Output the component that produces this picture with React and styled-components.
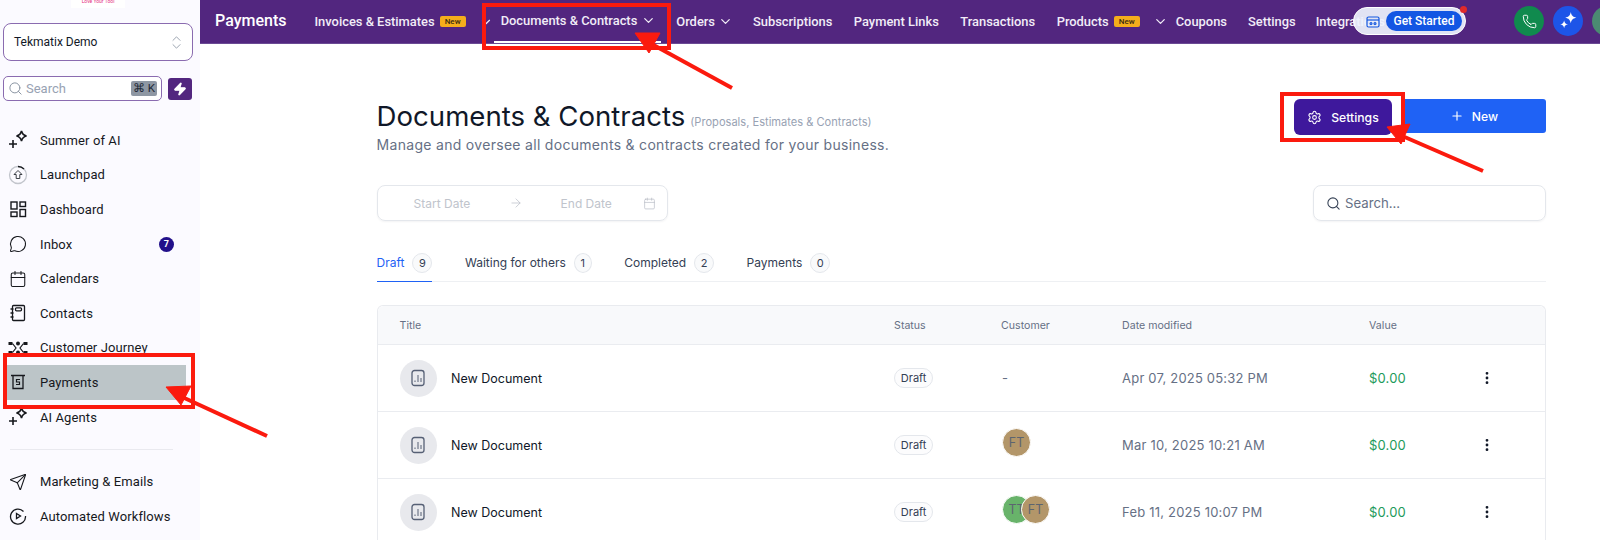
import React from "react";
import styled, { createGlobalStyle } from "styled-components";
import { ChevronDown, ChevronsUpDown, Search, Zap, Settings, Plus, ArrowRight, Calendar, MessageCircle, Send, Phone, EllipsisVertical } from "lucide-react";

const GlobalStyle = createGlobalStyle`
  html, body {
    margin: 0;
    height: 100%;
    overflow: hidden;
    background: #fff;
  }
  * {
    box-sizing: border-box;
  }
`;

const Page = styled.div`
  width: 1600px;
  height: 540px;
  display: flex;
  position: relative;
  overflow: hidden;
  font-family: Inter, "Liberation Sans", sans-serif;
`;

/* sidebar */
const Sidebar = styled.aside`
  width: 200px;
  flex: none;
  background: #fbfaff;
  font-family: Roboto, "Liberation Sans", sans-serif;
  display: flex;
  flex-direction: column;
`;

const LogoBox = styled.div`
  width: 54px;
  height: 8px;
  margin: 0 0 0 71px;
  background: #fff;
  color: #e5307f;
  font-size: 5px;
  line-height: 3px;
  text-align: center;
  overflow: hidden;
`;

const Switcher = styled.div`
  margin: 15px 7px 0 3px;
  height: 38px;
  border: 1px solid #8a6bb0;
  border-radius: 8px;
  background: #fff;
  display: flex;
  align-items: center;
  justify-content: space-between;
  padding: 0 7px 0 10px;
  font-size: 12px;
  color: #111827;
  svg {
    color: #8b95a3;
  }
`;

const SearchRow = styled.div`
  margin: 15px 8px 0 3px;
  display: flex;
  align-items: center;
  gap: 6px;
`;

const SearchBox = styled.div`
  flex: 1;
  height: 25px;
  border: 1px solid #8a6bb0;
  border-radius: 5px;
  background: #fff;
  display: flex;
  align-items: center;
  padding: 0 4px 0 4px;
  gap: 3px;
  font-size: 13px;
  color: #98a2b3;
  svg {
    color: #8b95a3;
  }
`;

const Kbd = styled.span`
  margin-left: auto;
  width: 26px;
  height: 15px;
  border-radius: 2px;
  background: #8e97a3;
  color: #1f2937;
  font-size: 11.5px;
  line-height: 15px;
  text-align: center;
`;

const BoltButton = styled.div`
  width: 24px;
  height: 22px;
  border-radius: 3px;
  background: #52267f;
  color: #fff;
  display: flex;
  align-items: center;
  justify-content: center;
`;

const NavList = styled.nav`
  margin-top: 22px;
  padding-left: 3px;
  width: 186px;
`;

const NavRow = styled.div`
  height: 34.6px;
  display: flex;
  align-items: center;
  gap: 13px;
  padding: 0 0 0 6px;
  font-size: 13px;
  letter-spacing: 0.1px;
  color: #16181d;
  background: ${(p) => (p.$active ? "#bcc5c8" : "transparent")};
`;

const NavIcon = styled.span`
  width: 18px;
  flex: none;
  display: flex;
  justify-content: center;
  svg {
    flex: none;
  }
`;

const NavCount = styled.span`
  margin-left: auto;
  margin-right: 12px;
  width: 15px;
  height: 15px;
  border-radius: 50%;
  background: #22108a;
  color: #fff;
  font-size: 9px;
  font-weight: 700;
  line-height: 15px;
  text-align: center;
`;

const NavDivider = styled.div`
  height: 1px;
  width: 163px;
  margin: 15px 0 14px 7px;
  background: #e9e9ef;
`;

/* right side */
const Content = styled.div`
  flex: 1;
  min-width: 0;
  display: flex;
  flex-direction: column;
`;

const TopBar = styled.header`
  height: 44px;
  flex: none;
  background: #52267f;
  color: #fff;
  font-family: Roboto, "Liberation Sans", sans-serif;
  display: flex;
  align-items: center;
  padding-left: 15px;
  position: relative;
  overflow: hidden;
  border-bottom: 1px solid #6b4a94;
`;

const TopTitle = styled.div`
  font-size: 16px;
  font-weight: 500;
  margin-right: 28px;
  margin-top: -3px;
`;

const TopItem = styled.div`
  height: 44px;
  display: flex;
  align-items: center;
  font-size: 12.9px;
  font-weight: 500;
  color: #f1ecf7;
  white-space: nowrap;
  margin-right: ${(p) => p.$gap || 21.5}px;
  position: relative;
  flex: none;
  svg {
    margin-left: ${(p) => p.$chevronGap || 3}px;
  }
  ${(p) =>
    p.$active &&
    `
    padding: 0 5px 2px 7px;
    margin-left: -7px;
    &::after {
      content: "";
      position: absolute;
      left: 0;
      right: 0;
      bottom: 1px;
      height: 2px;
      background: #fff;
    }
  `}
`;

const NewBadge = styled.span`
  margin-left: 5px;
  width: 26px;
  height: 11px;
  border-radius: 2px;
  background: #f5ad1b;
  color: #3a2a10;
  font-size: 8px;
  line-height: 11px;
  text-align: center;
`;

const GetStartedPill = styled.div`
  position: absolute;
  left: 1153px;
  top: 7px;
  width: 113px;
  height: 28px;
  border-radius: 14px;
  background: rgba(238, 243, 253, 0.92);
  border: 1px solid #fff;
  display: flex;
  align-items: center;
  justify-content: flex-end;
  padding-right: 3px;
  color: #1558e0;
  svg {
    position: absolute;
    left: 12px;
    top: 7px;
  }
`;

const GetStartedLabel = styled.span`
  width: 76px;
  height: 20px;
  border-radius: 10px;
  background: #1356e3;
  color: #fff;
  font-size: 12px;
  font-weight: 500;
  line-height: 20px;
  text-align: center;
`;

const RedDot = styled.span`
  position: absolute;
  right: -2px;
  top: -2px;
  width: 7px;
  height: 7px;
  border-radius: 50%;
  background: #e02a2a;
`;

const RoundAction = styled.div`
  position: absolute;
  top: 6px;
  left: ${(p) => p.$left}px;
  width: 30px;
  height: 30px;
  border-radius: 50%;
  background: ${(p) => p.$bg};
  color: #fff;
  display: flex;
  align-items: center;
  justify-content: center;
`;

const Main = styled.main`
  flex: 1;
  padding: 0 54px 0 176.6px;
  background: #fff;
`;

const HeadRow = styled.div`
  display: flex;
  justify-content: space-between;
  padding-top: 55px;
`;

const TitleLine = styled.div`
  display: flex;
  align-items: baseline;
  gap: 5px;
`;

const PageTitle = styled.h1`
  margin: 0;
  font-size: 27.6px;
  line-height: 34px;
  font-weight: 400;
  color: #101828;
`;

const PageHint = styled.span`
  font-size: 11.1px;
  color: #98a2b3;
`;

const PageDesc = styled.p`
  margin: 3px 0 0;
  font-size: 14px;
  line-height: 18px;
  letter-spacing: 0.3px;
  color: #667085;
`;

const HeadActions = styled.div`
  display: flex;
  gap: 10px;
`;

const ActionButton = styled.button`
  height: ${(p) => (p.$primary ? 34 : 36)}px;
  width: ${(p) => (p.$primary ? 144 : 98)}px;
  border: 0;
  border-radius: ${(p) => (p.$primary ? 3 : 6)}px;
  background: ${(p) => (p.$primary ? "#1f62f5" : "#3e189c")};
  color: #fff;
  font-family: inherit;
  font-size: 12.2px;
  font-weight: 500;
  display: flex;
  align-items: center;
  justify-content: center;
  gap: ${(p) => (p.$primary ? 8 : 9)}px;
`;

const FilterRow = styled.div`
  margin-top: 31px;
  display: flex;
  justify-content: space-between;
`;

const DateRange = styled.div`
  width: 291.5px;
  height: 36px;
  border: 1px solid #e4e7ec;
  border-radius: 8px;
  box-shadow: 0 1px 2px rgba(16, 24, 40, 0.05);
  display: grid;
  grid-template-columns: 36px 57px 38px 14px 38px 52px 30px 13px;
  align-items: center;
  font-size: 12px;
  white-space: nowrap;
  color: #c0c4cc;
  svg {
    color: #b8bcc6;
  }
`;

const TableSearch = styled.div`
  width: 233px;
  height: 36px;
  border: 1px solid #e4e7ec;
  border-radius: 8px;
  box-shadow: 0 1px 2px rgba(16, 24, 40, 0.05);
  display: flex;
  align-items: center;
  gap: 4px;
  padding-left: 12px;
  font-size: 13.2px;
  color: #667085;
  svg {
    color: #344054;
  }
`;

const Tabs = styled.div`
  margin-top: 24px;
  height: 37px;
  display: flex;
  border-bottom: 1px solid #eef0f3;
`;

const Tab = styled.div`
  height: 37px;
  display: flex;
  align-items: center;
  gap: 8px;
  margin-right: 32.5px;
  padding-bottom: 2px;
  font-size: 12px;
  color: ${(p) => (p.$active ? "#1f62f5" : "#344054")};
  box-shadow: ${(p) => (p.$active ? "inset 0 -1px 0 #1f62f5" : "none")};
`;

const TabCount = styled.span`
  width: ${(p) => (p.$narrow ? 18 : 20)}px;
  height: 20px;
  border-radius: 50%;
  border: 1px solid #e4e7ec;
  background: #f9fafb;
  color: #344054;
  font-size: 11px;
  line-height: 18px;
  text-align: center;
`;

const Table = styled.div`
  margin-top: 23px;
  border: 1px solid #e9ebef;
  border-radius: 6px 6px 0 0;
  border-bottom: 0;
`;

const gridColumns = "494.5px 107px 121px 247px 1fr";

const HeaderRow = styled.div`
  height: 39px;
  display: grid;
  grid-template-columns: ${gridColumns};
  align-items: center;
  padding-left: 22px;
  background: #f8f9fb;
  border-bottom: 1px solid #eaecf0;
  border-radius: 6px 6px 0 0;
  font-size: 10.6px;
  color: #667085;
`;

const DocRow = styled.div`
  height: 67px;
  display: grid;
  grid-template-columns: ${gridColumns};
  align-items: center;
  padding-left: 22px;
  border-bottom: 1px solid #eaecf0;
  font-size: 13px;
`;

const DocTitle = styled.div`
  display: flex;
  align-items: center;
  gap: 14.5px;
  color: #101828;
  font-size: 12.5px;
`;

const DocIcon = styled.span`
  width: 37px;
  height: 37px;
  border-radius: 50%;
  background: #e8e9ed;
  display: flex;
  align-items: center;
  justify-content: center;
`;

const StatusPill = styled.span`
  width: 39px;
  height: 20px;
  border: 1px solid #e4e7ec;
  border-radius: 10px;
  background: #fcfcfd;
  color: #344054;
  font-size: 11px;
  line-height: 18px;
  text-align: center;
`;

const Customer = styled.div`
  display: flex;
  align-items: center;
  margin-left: 1px;
  margin-top: ${(p) => (p.$empty ? 0 : -6)}px;
  color: #667085;
`;

const Avatar = styled.span`
  width: 29px;
  height: 29px;
  border-radius: 50%;
  background: ${(p) => (p.$green ? "#68b36a" : "#b39669")};
  border: 1px solid #fff;
  color: #5c6470;
  font-size: 12.5px;
  line-height: 27px;
  text-align: center;
  overflow: hidden;
  flex: none;
  & + & {
    margin-left: -10px;
  }
`;

const DateCell = styled.div`
  font-size: 13px;
  letter-spacing: 0.2px;
  color: #667085;
`;

const ValueCell = styled.div`
  display: flex;
  align-items: center;
  justify-content: space-between;
  padding-right: 50px;
  color: #1d9a5b;
  font-size: 13px;
  letter-spacing: 0.15px;
  svg {
    color: #111827;
  }
`;

/* red callouts drawn over the screenshot */
const CalloutBox = styled.div`
  position: absolute;
  left: ${(p) => p.$x}px;
  top: ${(p) => p.$y}px;
  width: ${(p) => p.$w}px;
  height: ${(p) => p.$h}px;
  border: 4px solid #fb1a0e;
  pointer-events: none;
`;

const ArrowLayer = styled.svg`
  position: absolute;
  left: 0;
  top: 0;
  pointer-events: none;
`;

const SparkPlus = () => (
  <svg width="20" height="20" viewBox="0 0 20 20" fill="none" stroke="#16181d" strokeWidth="1.6">
    <path d="M1 14h8M5 10v8" />
    <path d="M13.500 1c.7 3 1.900 4.300 5 5-3.100.7-4.300 1.900-5 5-.7-3.100-1.900-4.300-5-5 3.100-.7 4.300-2 5-5z" />
  </svg>
);

const Launch = () => (
  <svg width="20" height="20" viewBox="0 0 20 20" fill="none">
    <circle cx="10" cy="10" r="8.500" stroke="#c2c5cc" strokeWidth="1.300" />
    <path d="M10 1.500a8.500 8.500 0 0 1 6 2.500" stroke="#16181d" strokeWidth="1.300" />
    <path d="M10 5.500l4 4h-2.200v4H8.200v-4H6z" stroke="#3b3f46" strokeWidth="1" strokeLinejoin="round" />
  </svg>
);

const Dash = () => (
  <svg width="18" height="18" viewBox="0 0 18 18" fill="none" stroke="#16181d" strokeWidth="1.400">
    <rect x="2" y="2" width="6" height="7" />
    <rect x="11" y="2" width="5.500" height="4.500" />
    <rect x="2" y="12" width="6" height="4.500" />
    <rect x="11" y="9.500" width="5.500" height="7" />
  </svg>
);

const Notebook = () => (
  <svg width="18" height="18" viewBox="0 0 18 18" fill="none" stroke="#16181d" strokeWidth="1.300">
    <rect x="3.500" y="1.500" width="12" height="15" rx="1" />
    <rect x="6.500" y="3.800" width="6" height="3" rx="1" />
    <path d="M1.500 5h3M1.500 9h3M1.500 13h3" />
  </svg>
);

const Journey = () => (
  <svg width="20" height="14" viewBox="0 0 20 14" fill="#16181d">
    <circle cx="10" cy="2.500" r="2" />
    <circle cx="10" cy="11.500" r="2" />
    <rect x="0.500" y="1" width="4" height="3" />
    <rect x="15.500" y="1" width="4" height="3" />
    <rect x="0.500" y="10" width="4" height="3" />
    <rect x="15.500" y="10" width="4" height="3" />
    <path d="M4.500 2.500L8 7l-3.500 4.500M15.500 2.500L12 7l3.500 4.500" fill="none" stroke="#16181d" strokeWidth="1.200" />
  </svg>
);

const Receipt = () => (
  <svg width="18" height="18" viewBox="0 0 18 18" fill="none" stroke="#16181d" strokeWidth="1.300">
    <path d="M2 2.500h14M4 2.500v13h10v-13" />
    <path d="M11 6.500H7.500v2.500H10.500v2.500H7" strokeWidth="1.200" />
  </svg>
);

const Autoflow = () => (
  <svg width="18" height="18" viewBox="0 0 18 18" fill="none" stroke="#16181d" strokeWidth="1.300">
    <path d="M14.500 4.500A7.500 7.500 0 1 0 16.500 9" />
    <path d="M7.500 6.500l4 2.500-4 2.500z" />
  </svg>
);

const ChartDoc = () => (
  <svg width="16" height="18" viewBox="0 0 16 18" fill="none" stroke="#566075">
    <rect x="2" y="1.500" width="12" height="15" rx="2.500" strokeWidth="1.300" />
    <path d="M5 13v-1.500M8 13V6M11 13V9" strokeWidth="1" />
  </svg>
);

const Sparkle = () => (
  <svg width="20" height="20" viewBox="0 0 18 18" fill="#fff">
    <path d="M11.500 1c.6 3.200 1.800 4.400 5 5-3.200.6-4.400 1.800-5 5-.6-3.200-1.800-4.400-5-5 3.200-.6 4.400-1.800 5-5z" />
    <path d="M5.500 8.500c.4 2.100 1.400 3.100 3.500 3.500-2.100.4-3.100 1.400-3.500 3.500-.4-2.100-1.400-3.100-3.500-3.500 2.100-.4 3.100-1.400 3.500-3.500z" />
  </svg>
);

const Ticket = () => (
  <svg width="14" height="14" viewBox="0 0 14 14" fill="none" stroke="#1558e0" strokeWidth="1.200">
    <rect x="1" y="2" width="12" height="10" rx="1.500" />
    <path d="M1 5h12" />
    <circle cx="5" cy="8.500" r="1" />
    <circle cx="9" cy="8.500" r="1" />
  </svg>
);

const sideTop = [
  { label: "Summer of AI", icon: <SparkPlus /> },
  { label: "Launchpad", icon: <Launch /> },
  { label: "Dashboard", icon: <Dash /> },
  { label: "Inbox", icon: <MessageCircle size={18} strokeWidth={1.4} />, count: 7 },
  { label: "Calendars", icon: <Calendar size={18} strokeWidth={1.4} /> },
  { label: "Contacts", icon: <Notebook /> },
  { label: "Customer Journey", icon: <Journey /> },
  { label: "Payments", icon: <Receipt />, active: true },
  { label: "AI Agents", icon: <SparkPlus /> },
];

const sideBottom = [
  { label: "Marketing & Emails", icon: <Send size={18} strokeWidth={1.4} /> },
  { label: "Automated Workflows", icon: <Autoflow /> },
];

const tabs = [
  { label: "Draft", count: 9, active: true },
  { label: "Waiting for others", count: 1 },
  { label: "Completed", count: 2 },
  { label: "Payments", count: 0 },
];

const docs = [
  { date: "Apr 07, 2025 05:32 PM", people: [] },
  { date: "Mar 10, 2025 10:21 AM", people: ["FT"] },
  { date: "Feb 11, 2025 10:07 PM", people: ["TT", "FT"] },
];

function SideItem({ item }) {
  return (
    <NavRow $active={item.active}>
      <NavIcon>{item.icon}</NavIcon>
      <span>{item.label}</span>
      {item.count && <NavCount>{item.count}</NavCount>}
    </NavRow>
  );
}

export default function App() {
  return (
    <Page>
      <GlobalStyle />
      <Sidebar>
        <LogoBox>Love Your Tool</LogoBox>
        <Switcher>
          Tekmatix Demo
          <ChevronsUpDown size={17} strokeWidth={1.2} />
        </Switcher>
        <SearchRow>
          <SearchBox>
            <Search size={15} strokeWidth={1.6} />
            Search
            <Kbd>⌘ K</Kbd>
          </SearchBox>
          <BoltButton>
            <Zap size={14} fill="#fff" />
          </BoltButton>
        </SearchRow>
        <NavList>
          {sideTop.map((item) => (
            <SideItem key={item.label} item={item} />
          ))}
          <NavDivider />
          {sideBottom.map((item) => (
            <SideItem key={item.label} item={item} />
          ))}
        </NavList>
      </Sidebar>

      <Content>
        <TopBar>
          <TopTitle>Payments</TopTitle>
          <TopItem $gap={8} $chevronGap={13}>
            Invoices &amp; Estimates
            <NewBadge>New</NewBadge>
            <ChevronDown size={14} strokeWidth={2} />
          </TopItem>
          <TopItem $active $gap={15} $chevronGap={4}>
            Documents &amp; Contracts
            <ChevronDown size={15} strokeWidth={2} />
          </TopItem>
          <TopItem $gap={20}>
            Orders
            <ChevronDown size={15} strokeWidth={2} />
          </TopItem>
          <TopItem>Subscriptions</TopItem>
          <TopItem>Payment Links</TopItem>
          <TopItem>Transactions</TopItem>
          <TopItem $gap={8} $chevronGap={13}>
            Products
            <NewBadge>New</NewBadge>
            <ChevronDown size={15} strokeWidth={2} />
          </TopItem>
          <TopItem $gap={21}>Coupons</TopItem>
          <TopItem $gap={20}>Settings</TopItem>
          <TopItem>Integrations</TopItem>
          <GetStartedPill>
            <Ticket />
            <GetStartedLabel>Get Started</GetStartedLabel>
            <RedDot />
          </GetStartedPill>
          <RoundAction $left={1314} $bg="#108a4e">
            <Phone size={15} strokeWidth={1.6} />
          </RoundAction>
          <RoundAction $left={1353} $bg="#1d55e8">
            <Sparkle />
          </RoundAction>
          <RoundAction $left={1392} $bg="#4b8a72" />
        </TopBar>

        <Main>
          <HeadRow>
            <div>
              <TitleLine>
                <PageTitle>Documents &amp; Contracts</PageTitle>
                <PageHint>(Proposals, Estimates &amp; Contracts)</PageHint>
              </TitleLine>
              <PageDesc>Manage and oversee all documents &amp; contracts created for your business.</PageDesc>
            </div>
            <HeadActions>
              <ActionButton>
                <Settings size={15} strokeWidth={1.7} />
                Settings
              </ActionButton>
              <ActionButton $primary>
                <Plus size={14} strokeWidth={2} />
                New
              </ActionButton>
            </HeadActions>
          </HeadRow>

          <FilterRow>
            <DateRange>
              <span />
              <span>Start Date</span>
              <span />
              <ArrowRight size={14} strokeWidth={1.2} />
              <span />
              <span>End Date</span>
              <span />
              <Calendar size={13} strokeWidth={1.3} />
            </DateRange>
            <TableSearch>
              <Search size={15} strokeWidth={1.7} />
              Search...
            </TableSearch>
          </FilterRow>

          <Tabs>
            {tabs.map((t) => (
              <Tab key={t.label} $active={t.active}>
                {t.label}
                <TabCount $narrow={t.count === 1}>{t.count}</TabCount>
              </Tab>
            ))}
          </Tabs>

          <Table>
            <HeaderRow>
              <span>Title</span>
              <span>Status</span>
              <span>Customer</span>
              <span>Date modified</span>
              <span>Value</span>
            </HeaderRow>
            {docs.map((d) => (
              <DocRow key={d.date}>
                <DocTitle>
                  <DocIcon>
                    <ChartDoc />
                  </DocIcon>
                  New Document
                </DocTitle>
                <StatusPill>Draft</StatusPill>
                <Customer $empty={!d.people.length}>
                  {d.people.length === 0 && "-"}
                  {d.people.map((p) => (
                    <Avatar key={p} $green={p === "TT"}>
                      {p}
                    </Avatar>
                  ))}
                </Customer>
                <DateCell>{d.date}</DateCell>
                <ValueCell>
                  $0.00
                  <EllipsisVertical size={16} strokeWidth={2.2} />
                </ValueCell>
              </DocRow>
            ))}
          </Table>
        </Main>
      </Content>

      <CalloutBox $x={3} $y={353} $w={192} $h={56} />
      <CalloutBox $x={482} $y={3} $w={189} $h={47} />
      <CalloutBox $x={1280} $y={92} $w={125} $h={50} />
      <ArrowLayer width="1600" height="540">
        <g fill="#fb1a0e" stroke="#fb1a0e">
          <path d="M180 396L267 436" strokeWidth="4" />
          <path d="M166 387L191 386L181 405z" />
          <path d="M648 42L732 88" strokeWidth="4" />
          <path d="M635 33L660 33L649 53z" />
          <path d="M1400 135L1483 171" strokeWidth="4" />
          <path d="M1387 127L1410 124L1401 144z" />
        </g>
      </ArrowLayer>
    </Page>
  );
}
